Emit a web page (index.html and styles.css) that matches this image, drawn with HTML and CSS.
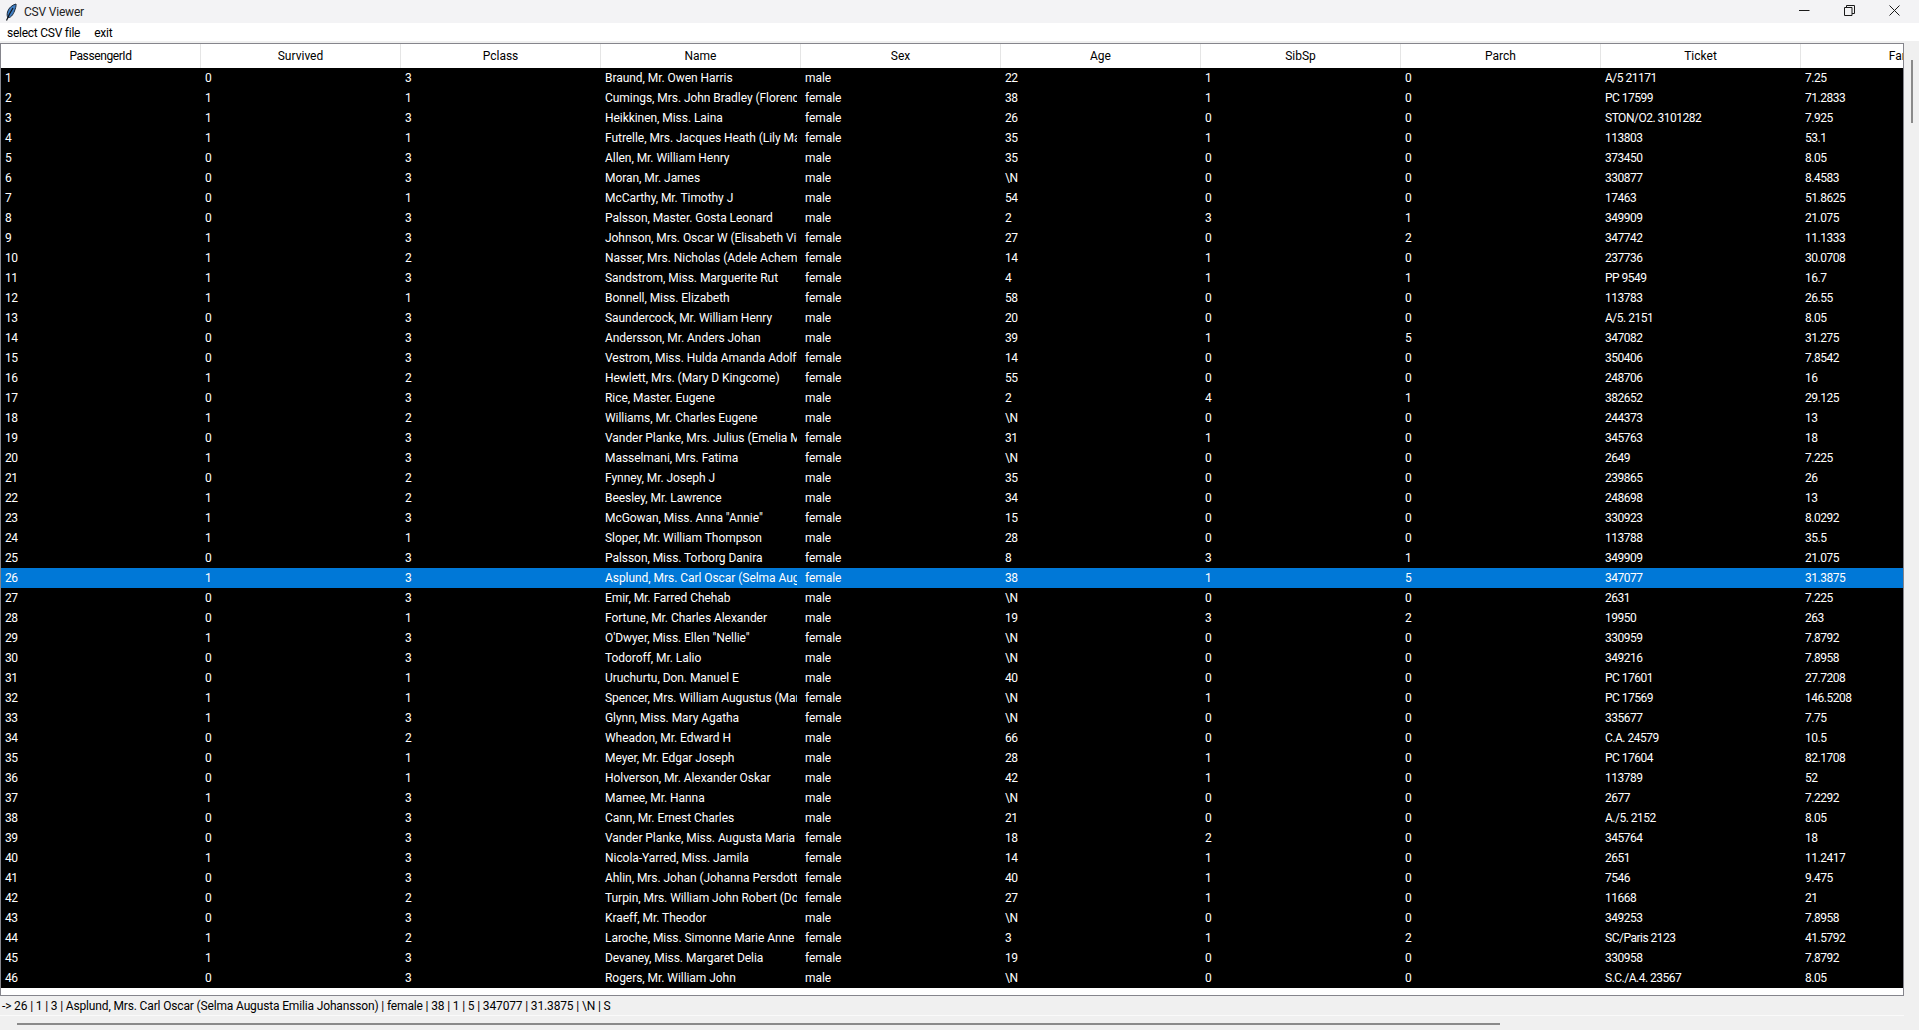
FILE: index.html
```html
<!DOCTYPE html>
<html lang="en">

<head>
  <meta charset="UTF-8">
  <title>CSV Viewer</title>
  <link rel="stylesheet" href="styles.css">
</head>

<body>
  <div class="titlebar">
    <svg class="app-icon" width="16" height="18" viewBox="0 0 16 18">
      <path d="M14 1C10 2 6.500 5 5.500 9c-.6 2.400-.4 4.400.4 5.600C8.500 15 11 12 12.500 8 13.500 5.500 14.300 3 14 1z" fill="#3f7fc4" stroke="#1d2a3a" stroke-width="1"/>
      <path d="M11 5 7.500 11 4.500 17.500" fill="none" stroke="#10151c" stroke-width="1.200"/>
    </svg>
    <span class="title">CSV Viewer</span>
    <div class="win-buttons">
      <span class="win-btn">
        <svg width="11" height="11" viewBox="0 0 11 11"><path d="M0 5.500h10.500" stroke="#1a1a1a" fill="none"/></svg>
      </span>
      <span class="win-btn">
        <svg width="11" height="11" viewBox="0 0 11 11"><path d="M.5 2.500h7.500v8h-7.500zM2.500 2.500v-2h8v8h-2.500" stroke="#1a1a1a" fill="none"/></svg>
      </span>
      <span class="win-btn">
        <svg width="11" height="11" viewBox="0 0 11 11"><path d="M.5.500l10 10M10.500.500l-10 10" stroke="#1a1a1a" fill="none"/></svg>
      </span>
    </div>
  </div>

  <div class="menubar">
    <span class="menu-item">select CSV file</span>
    <span class="menu-item">exit</span>
  </div>

  <div class="main">
    <div class="tree">
      <table>
        <thead>
          <tr><th>PassengerId</th><th>Survived</th><th>Pclass</th><th>Name</th><th>Sex</th><th>Age</th><th>SibSp</th><th>Parch</th><th>Ticket</th><th>Fare</th></tr>
        </thead>
        <tbody>
          <tr><td>1</td><td>0</td><td>3</td><td>Braund, Mr. Owen Harris</td><td>male</td><td>22</td><td>1</td><td>0</td><td>A/5 21171</td><td>7.25</td></tr>
          <tr><td>2</td><td>1</td><td>1</td><td>Cumings, Mrs. John Bradley (Florence Briggs Thayer)</td><td>female</td><td>38</td><td>1</td><td>0</td><td>PC 17599</td><td>71.2833</td></tr>
          <tr><td>3</td><td>1</td><td>3</td><td>Heikkinen, Miss. Laina</td><td>female</td><td>26</td><td>0</td><td>0</td><td>STON/O2. 3101282</td><td>7.925</td></tr>
          <tr><td>4</td><td>1</td><td>1</td><td>Futrelle, Mrs. Jacques Heath (Lily May Peel)</td><td>female</td><td>35</td><td>1</td><td>0</td><td>113803</td><td>53.1</td></tr>
          <tr><td>5</td><td>0</td><td>3</td><td>Allen, Mr. William Henry</td><td>male</td><td>35</td><td>0</td><td>0</td><td>373450</td><td>8.05</td></tr>
          <tr><td>6</td><td>0</td><td>3</td><td>Moran, Mr. James</td><td>male</td><td>\N</td><td>0</td><td>0</td><td>330877</td><td>8.4583</td></tr>
          <tr><td>7</td><td>0</td><td>1</td><td>McCarthy, Mr. Timothy J</td><td>male</td><td>54</td><td>0</td><td>0</td><td>17463</td><td>51.8625</td></tr>
          <tr><td>8</td><td>0</td><td>3</td><td>Palsson, Master. Gosta Leonard</td><td>male</td><td>2</td><td>3</td><td>1</td><td>349909</td><td>21.075</td></tr>
          <tr><td>9</td><td>1</td><td>3</td><td>Johnson, Mrs. Oscar W (Elisabeth Vilhelmina Berg)</td><td>female</td><td>27</td><td>0</td><td>2</td><td>347742</td><td>11.1333</td></tr>
          <tr><td>10</td><td>1</td><td>2</td><td>Nasser, Mrs. Nicholas (Adele Achem)</td><td>female</td><td>14</td><td>1</td><td>0</td><td>237736</td><td>30.0708</td></tr>
          <tr><td>11</td><td>1</td><td>3</td><td>Sandstrom, Miss. Marguerite Rut</td><td>female</td><td>4</td><td>1</td><td>1</td><td>PP 9549</td><td>16.7</td></tr>
          <tr><td>12</td><td>1</td><td>1</td><td>Bonnell, Miss. Elizabeth</td><td>female</td><td>58</td><td>0</td><td>0</td><td>113783</td><td>26.55</td></tr>
          <tr><td>13</td><td>0</td><td>3</td><td>Saundercock, Mr. William Henry</td><td>male</td><td>20</td><td>0</td><td>0</td><td>A/5. 2151</td><td>8.05</td></tr>
          <tr><td>14</td><td>0</td><td>3</td><td>Andersson, Mr. Anders Johan</td><td>male</td><td>39</td><td>1</td><td>5</td><td>347082</td><td>31.275</td></tr>
          <tr><td>15</td><td>0</td><td>3</td><td>Vestrom, Miss. Hulda Amanda Adolfina</td><td>female</td><td>14</td><td>0</td><td>0</td><td>350406</td><td>7.8542</td></tr>
          <tr><td>16</td><td>1</td><td>2</td><td>Hewlett, Mrs. (Mary D Kingcome)</td><td>female</td><td>55</td><td>0</td><td>0</td><td>248706</td><td>16</td></tr>
          <tr><td>17</td><td>0</td><td>3</td><td>Rice, Master. Eugene</td><td>male</td><td>2</td><td>4</td><td>1</td><td>382652</td><td>29.125</td></tr>
          <tr><td>18</td><td>1</td><td>2</td><td>Williams, Mr. Charles Eugene</td><td>male</td><td>\N</td><td>0</td><td>0</td><td>244373</td><td>13</td></tr>
          <tr><td>19</td><td>0</td><td>3</td><td>Vander Planke, Mrs. Julius (Emelia Maria Vandemoortele)</td><td>female</td><td>31</td><td>1</td><td>0</td><td>345763</td><td>18</td></tr>
          <tr><td>20</td><td>1</td><td>3</td><td>Masselmani, Mrs. Fatima</td><td>female</td><td>\N</td><td>0</td><td>0</td><td>2649</td><td>7.225</td></tr>
          <tr><td>21</td><td>0</td><td>2</td><td>Fynney, Mr. Joseph J</td><td>male</td><td>35</td><td>0</td><td>0</td><td>239865</td><td>26</td></tr>
          <tr><td>22</td><td>1</td><td>2</td><td>Beesley, Mr. Lawrence</td><td>male</td><td>34</td><td>0</td><td>0</td><td>248698</td><td>13</td></tr>
          <tr><td>23</td><td>1</td><td>3</td><td>McGowan, Miss. Anna "Annie"</td><td>female</td><td>15</td><td>0</td><td>0</td><td>330923</td><td>8.0292</td></tr>
          <tr><td>24</td><td>1</td><td>1</td><td>Sloper, Mr. William Thompson</td><td>male</td><td>28</td><td>0</td><td>0</td><td>113788</td><td>35.5</td></tr>
          <tr><td>25</td><td>0</td><td>3</td><td>Palsson, Miss. Torborg Danira</td><td>female</td><td>8</td><td>3</td><td>1</td><td>349909</td><td>21.075</td></tr>
          <tr class="selected"><td>26</td><td>1</td><td>3</td><td>Asplund, Mrs. Carl Oscar (Selma Augusta Emilia Johansson)</td><td>female</td><td>38</td><td>1</td><td>5</td><td>347077</td><td>31.3875</td></tr>
          <tr><td>27</td><td>0</td><td>3</td><td>Emir, Mr. Farred Chehab</td><td>male</td><td>\N</td><td>0</td><td>0</td><td>2631</td><td>7.225</td></tr>
          <tr><td>28</td><td>0</td><td>1</td><td>Fortune, Mr. Charles Alexander</td><td>male</td><td>19</td><td>3</td><td>2</td><td>19950</td><td>263</td></tr>
          <tr><td>29</td><td>1</td><td>3</td><td>O'Dwyer, Miss. Ellen "Nellie"</td><td>female</td><td>\N</td><td>0</td><td>0</td><td>330959</td><td>7.8792</td></tr>
          <tr><td>30</td><td>0</td><td>3</td><td>Todoroff, Mr. Lalio</td><td>male</td><td>\N</td><td>0</td><td>0</td><td>349216</td><td>7.8958</td></tr>
          <tr><td>31</td><td>0</td><td>1</td><td>Uruchurtu, Don. Manuel E</td><td>male</td><td>40</td><td>0</td><td>0</td><td>PC 17601</td><td>27.7208</td></tr>
          <tr><td>32</td><td>1</td><td>1</td><td>Spencer, Mrs. William Augustus (Marie Eugenie)</td><td>female</td><td>\N</td><td>1</td><td>0</td><td>PC 17569</td><td>146.5208</td></tr>
          <tr><td>33</td><td>1</td><td>3</td><td>Glynn, Miss. Mary Agatha</td><td>female</td><td>\N</td><td>0</td><td>0</td><td>335677</td><td>7.75</td></tr>
          <tr><td>34</td><td>0</td><td>2</td><td>Wheadon, Mr. Edward H</td><td>male</td><td>66</td><td>0</td><td>0</td><td>C.A. 24579</td><td>10.5</td></tr>
          <tr><td>35</td><td>0</td><td>1</td><td>Meyer, Mr. Edgar Joseph</td><td>male</td><td>28</td><td>1</td><td>0</td><td>PC 17604</td><td>82.1708</td></tr>
          <tr><td>36</td><td>0</td><td>1</td><td>Holverson, Mr. Alexander Oskar</td><td>male</td><td>42</td><td>1</td><td>0</td><td>113789</td><td>52</td></tr>
          <tr><td>37</td><td>1</td><td>3</td><td>Mamee, Mr. Hanna</td><td>male</td><td>\N</td><td>0</td><td>0</td><td>2677</td><td>7.2292</td></tr>
          <tr><td>38</td><td>0</td><td>3</td><td>Cann, Mr. Ernest Charles</td><td>male</td><td>21</td><td>0</td><td>0</td><td>A./5. 2152</td><td>8.05</td></tr>
          <tr><td>39</td><td>0</td><td>3</td><td>Vander Planke, Miss. Augusta Maria</td><td>female</td><td>18</td><td>2</td><td>0</td><td>345764</td><td>18</td></tr>
          <tr><td>40</td><td>1</td><td>3</td><td>Nicola-Yarred, Miss. Jamila</td><td>female</td><td>14</td><td>1</td><td>0</td><td>2651</td><td>11.2417</td></tr>
          <tr><td>41</td><td>0</td><td>3</td><td>Ahlin, Mrs. Johan (Johanna Persdotter Larsson)</td><td>female</td><td>40</td><td>1</td><td>0</td><td>7546</td><td>9.475</td></tr>
          <tr><td>42</td><td>0</td><td>2</td><td>Turpin, Mrs. William John Robert (Dorothy Ann Wonnacott)</td><td>female</td><td>27</td><td>1</td><td>0</td><td>11668</td><td>21</td></tr>
          <tr><td>43</td><td>0</td><td>3</td><td>Kraeff, Mr. Theodor</td><td>male</td><td>\N</td><td>0</td><td>0</td><td>349253</td><td>7.8958</td></tr>
          <tr><td>44</td><td>1</td><td>2</td><td>Laroche, Miss. Simonne Marie Anne</td><td>female</td><td>3</td><td>1</td><td>2</td><td>SC/Paris 2123</td><td>41.5792</td></tr>
          <tr><td>45</td><td>1</td><td>3</td><td>Devaney, Miss. Margaret Delia</td><td>female</td><td>19</td><td>0</td><td>0</td><td>330958</td><td>7.8792</td></tr>
          <tr><td>46</td><td>0</td><td>3</td><td>Rogers, Mr. William John</td><td>male</td><td>\N</td><td>0</td><td>0</td><td>S.C./A.4. 23567</td><td>8.05</td></tr>
        </tbody>
      </table>
    </div>
    <div class="vscroll"><div class="vthumb"></div></div>
  </div>

  <div class="status">-&gt; 26 | 1 | 3 | Asplund, Mrs. Carl Oscar (Selma Augusta Emilia Johansson) | female | 38 | 1 | 5 | 347077 | 31.3875 | \N | S</div>

  <div class="hscroll"><div class="hthumb"></div></div>
</body>

</html>
```

FILE: styles.css
```css
* {
  box-sizing: border-box;
}

html,
body {
  height: 100%;
}

body {
  margin: 0;
  background-color: #f0f0f0;
  color: #000;
  font-family: 'Roboto', 'Noto Sans', sans-serif;
  font-size: 12px;
  overflow: hidden;
  display: flex;
  flex-direction: column;
}

/* title bar */
.titlebar {
  height: 23px;
  background: #f3f3f5;
  display: flex;
  align-items: center;
  flex-shrink: 0;
  padding-left: 2px;
}

.app-icon {
  flex-shrink: 0;
}

.title {
  margin-left: 6px;
  color: #222;
  letter-spacing: -0.2px;
}

.win-buttons {
  margin-left: auto;
  display: flex;
  padding-right: 2px;
}

.win-btn {
  width: 45px;
  height: 23px;
  display: flex;
  align-items: center;
  justify-content: center;
  padding-bottom: 3px;
}

/* menu */
.menubar {
  height: 18px;
  padding-top: 2px;
  background: #fff;
  display: flex;
  align-items: center;
  flex-shrink: 0;
}

.menu-item {
  padding: 0 7px;
  letter-spacing: -0.25px;
}

/* table */
.main {
  margin-top: 2px;
  height: 953px;
  display: flex;
  flex-shrink: 0;
}

.tree {
  width: 1904px;
  border: 1px solid #85858c;
  background: #fff;
  overflow: hidden;
}

table {
  width: 2000px;
  table-layout: fixed;
  border-collapse: separate;
  border-spacing: 0;
}

th {
  height: 24px;
  padding: 0;
  font-weight: normal;
  text-align: center;
  background: #fff;
  border-right: 1px solid #e5e5e5;
}

th:first-child {
  letter-spacing: -0.4px;
}

td {
  height: 20px;
  padding: 0 0 0 4px;
  border-right: 4px solid transparent;
  white-space: nowrap;
  overflow: hidden;
  color: #fff;
  letter-spacing: -0.5px;
}

td:nth-child(4),
td:nth-child(5) {
  letter-spacing: -0.05px;
}

tbody tr {
  background: #000;
}

tbody tr.selected {
  background: #0078d7;
}

/* scrollbars */
.vscroll {
  width: 15px;
  position: relative;
}

.vthumb {
  position: absolute;
  left: 7px;
  top: 17px;
  width: 2px;
  height: 63px;
  background: #8a8a8a;
}

.status {
  height: 20px;
  padding-left: 2px;
  line-height: 21px;
  letter-spacing: -0.15px;
  border-bottom: 1px solid #fafafa;
  flex-shrink: 0;
  width: 1904px;
}

.hscroll {
  flex: 1;
  position: relative;
}

.hthumb {
  position: absolute;
  left: 17px;
  top: 7px;
  width: 1483px;
  height: 2px;
  background: #8a8a8a;
}
```
